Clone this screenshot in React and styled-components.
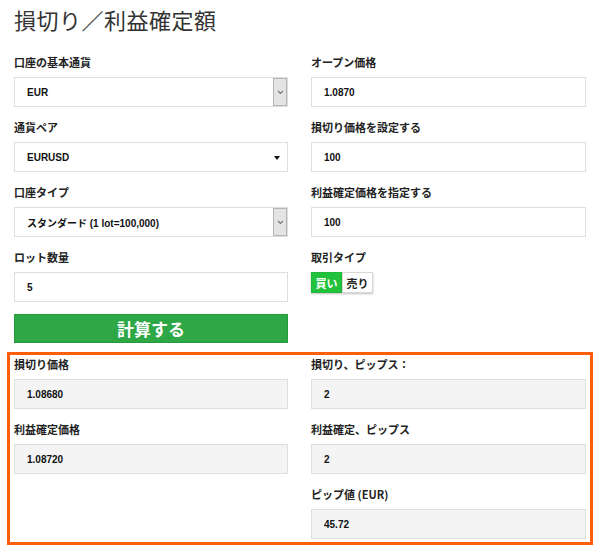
import React, { useState } from 'react';
import styled, { createGlobalStyle } from 'styled-components';

const GlobalStyle = createGlobalStyle`
  body {
    margin: 0;
    background: #fff;
    font-family: "Noto Sans CJK JP", "Noto Sans", sans-serif;
    color: #222;
  }
`;

const Page = styled.div`
  width: 600px;
  padding: 4px 0 0;
  box-sizing: border-box;
`;

const Title = styled.h1`
  margin: 0 0 21px 14px;
  font-size: 22px;
  line-height: 30px;
  font-weight: 400;
  color: #333;
  letter-spacing: 0.5px;
`;

const Grid = styled.div`
  display: grid;
  grid-template-columns: 274px 275px;
  column-gap: 23px;
  padding: 0 ${(p) => p.$pad}px;
`;

const Column = styled.div`
  display: flex;
  flex-direction: column;
`;

const Field = styled.div`
  display: flex;
  flex-direction: column;
  margin-bottom: ${(p) => (p.$last ? 0 : 13)}px;
`;

const Label = styled.div`
  font-size: 11px;
  line-height: 15px;
  font-weight: 700;
  color: #222;
  margin-bottom: 7px;
`;

const Box = styled.div`
  position: relative;
  height: 30px;
  box-sizing: border-box;
  border: 1px solid #dedede;
  background: ${(p) => (p.$readonly ? '#f4f4f4' : '#fff')};
  display: flex;
  align-items: center;
  padding-left: 12px;
  font-family: "Liberation Sans", "Noto Sans CJK JP", sans-serif;
  font-size: 10px;
  font-weight: 700;
  color: #111;
`;

const SpinArrow = styled.div`
  position: absolute;
  top: 0;
  right: 0;
  width: 14px;
  height: 28px;
  box-sizing: border-box;
  border: 1px solid #b5b5b5;
  background: #e4e4e4;
  display: flex;
  align-items: center;
  justify-content: center;
`;

const Caret = styled.div`
  position: absolute;
  right: 7px;
  top: 13px;
  width: 0;
  height: 0;
  border-left: 3px solid transparent;
  border-right: 3px solid transparent;
  border-top: 4px solid #111;
`;

const CalcButton = styled.button`
  margin-top: 12px;
  height: 29px;
  border: 1px solid #259a3a;
  background: #2ea746;
  color: #fff;
  font-family: "Noto Sans CJK JP", sans-serif;
  font-size: 17px;
  font-weight: 700;
  padding: 0;
  cursor: pointer;
`;

const Toggle = styled.div`
  display: flex;
  align-self: flex-start;
  box-shadow: 0 1px 2px rgba(0, 0, 0, 0.25);
`;

const ToggleItem = styled.button`
  width: 31px;
  height: 21px;
  padding: 0;
  border: 1px solid ${(p) => (p.$active ? '#1fb83a' : '#d8d8d8')};
  background: ${(p) => (p.$active ? '#22c23d' : '#fff')};
  color: ${(p) => (p.$active ? '#fff' : '#222')};
  font-family: "Noto Sans CJK JP", sans-serif;
  font-size: 11px;
  font-weight: 700;
  cursor: pointer;
`;

const Results = styled.div`
  margin: 9px 7px 0;
  border: 3px solid #ff5f0a;
  padding: 2px 0 3px;
`;

function Chevron() {
  return (
    <svg width="7" height="5" viewBox="0 0 7 5">
      <path d="M1 1 L3.5 3.5 L6 1" fill="none" stroke="#777" strokeWidth="1.1" />
    </svg>
  );
}

function Input({ label, value, readonly, select, caret, last }) {
  return (
    <Field $last={last}>
      <Label>{label}</Label>
      <Box $readonly={readonly}>
        {value}
        {select && (
          <SpinArrow>
            <Chevron />
          </SpinArrow>
        )}
        {caret && <Caret />}
      </Box>
    </Field>
  );
}

export default function App() {
  const [side, setSide] = useState('buy');

  return (
    <Page>
      <GlobalStyle />
      <Title>損切り／利益確定額</Title>
      <Grid $pad={14}>
        <Column>
          <Input label="口座の基本通貨" value="EUR" select />
          <Input label="通貨ペア" value="EURUSD" caret />
          <Input label="口座タイプ" value="スタンダード (1 lot=100,000)" select />
          <Input label="ロット数量" value="5" last />
          <CalcButton>計算する</CalcButton>
        </Column>
        <Column>
          <Input label="オープン価格" value="1.0870" />
          <Input label="損切り価格を設定する" value="100" />
          <Input label="利益確定価格を指定する" value="100" />
          <Field $last>
            <Label>取引タイプ</Label>
            <Toggle>
              <ToggleItem $active={side === 'buy'} onClick={() => setSide('buy')}>
                買い
              </ToggleItem>
              <ToggleItem $active={side === 'sell'} onClick={() => setSide('sell')}>
                売り
              </ToggleItem>
            </Toggle>
          </Field>
        </Column>
      </Grid>
      <Results>
        <Grid $pad={4}>
          <Column>
            <Input label="損切り価格" value="1.08680" readonly />
            <Input label="利益確定価格" value="1.08720" readonly last />
          </Column>
          <Column>
            <Input label="損切り、ピップス：" value="2" readonly />
            <Input label="利益確定、ピップス" value="2" readonly />
            <Input label="ピップ値 (EUR)" value="45.72" readonly last />
          </Column>
        </Grid>
      </Results>
    </Page>
  );
}
